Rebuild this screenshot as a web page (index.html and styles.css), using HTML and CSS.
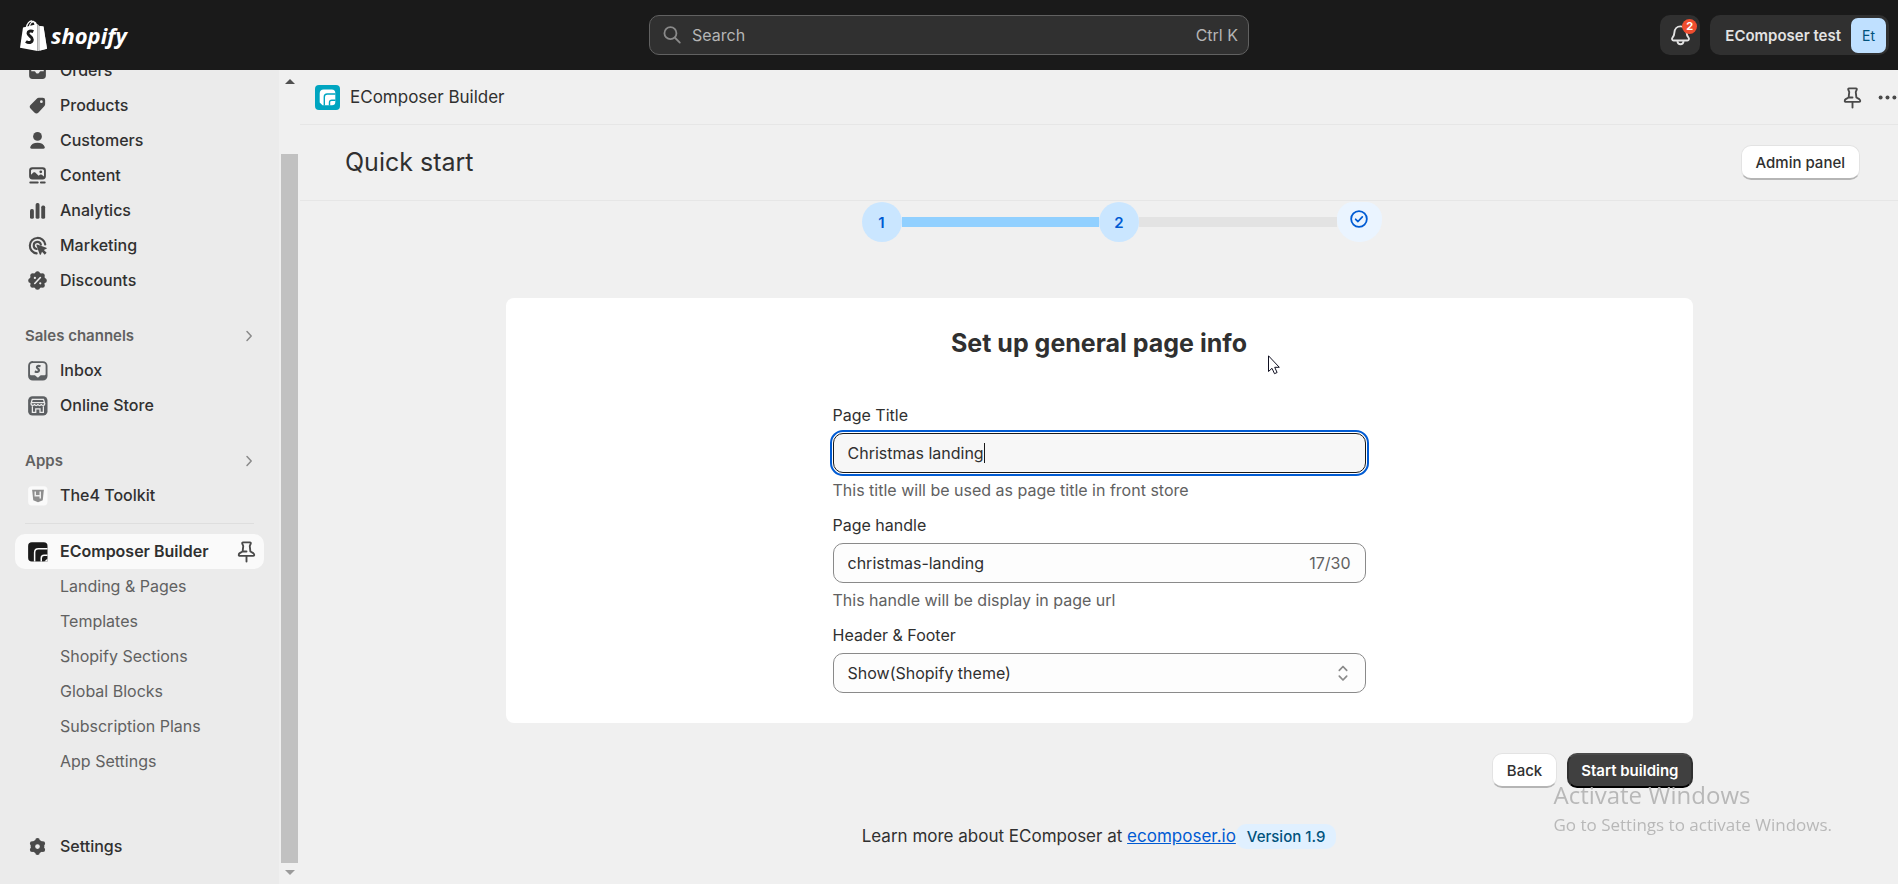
FILE: index.html
```html
<!DOCTYPE html>
<html lang="en">
<head>
<meta charset="utf-8">
<title>EComposer Builder · Quick start</title>
<link rel="stylesheet" href="styles.css">
</head>
<body>
<svg class="sprite" aria-hidden="true">
  <symbol id="pin" viewBox="0 0 20 20">
    <path d="M7.200 2.700h5.600c.5 0 .8.5.6 1l-.8 1.900.5 4.400 2.300 1.300c.6.5.8 1 .8 1.500 0 .5-.4.700-.8.700H4.600c-.5 0-.8-.3-.8-.8 0-.600.300-1.100.800-1.400l2.300-1.300.5-4.400-.8-1.900c-.2-.5.1-1 .6-1zM7.400 10h2.600" fill="none" stroke="currentColor" stroke-width="1.500" stroke-linejoin="round" stroke-linecap="round"/>
    <path d="M10 14v4" stroke="currentColor" stroke-width="1.500" stroke-linecap="round"/>
  </symbol>
  <symbol id="chevron" viewBox="0 0 20 20">
    <path d="M8 5.500l4.200 4.500L8 14.500" fill="none" stroke="currentColor" stroke-width="1.500" stroke-linecap="round" stroke-linejoin="round"/>
  </symbol>
</svg>

<header class="topbar">
  <a class="logo" href="#" aria-label="Shopify">
    <svg class="logo-bag" viewBox="0 0 27 31">
      <path d="M6.500 7.500C7 3.500 9.500.8 12 1c2 .1 3 2 3.200 4.500M9.500 6.500C10 3.500 12 1.700 14 2c1.500.3 2.200 1.600 2.500 3.500" fill="none" stroke="#fff" stroke-width="1.300"/>
      <path d="M3 7.500L17.500 4v27L0 27.700z" fill="#fff"/>
      <path d="M17.500 4l2 2 4 .5L27 28.800 18.500 31h-1z" fill="#d4d4d4"/>
      <path d="M20 6l3.500.5L27 28.800l-7 1.700z" fill="#fff"/>
      <path d="M13.300 11.600c-2.600-1.300-5.300-.4-5.300 1.700 0 2.900 4.500 3 4.300 6.300-.2 3-3.500 4-6.300 1.800" fill="none" stroke="#1a1a1a" stroke-width="3"/>
    </svg>
    <span class="logo-word">shopify</span>
  </a>
  <button class="search" type="button">
    <svg class="icon-search" viewBox="0 0 20 20"><circle cx="8.700" cy="8.500" r="5" fill="none" stroke="currentColor" stroke-width="1.500"/><path d="M12.500 12.300l4 4" stroke="currentColor" stroke-width="1.500" stroke-linecap="round"/></svg>
    <span>Search</span>
    <span class="search-keys">Ctrl K</span>
  </button>
  <div class="account">
    <button class="bell" type="button" aria-label="Notifications">
      <svg class="icon" viewBox="0 0 20 20"><path d="M10 2.700c-2.900 0-4.700 2.200-4.900 5-.1 2-.6 3-1.500 4-.8 1-.3 2.300.9 2.300h11c1.200 0 1.700-1.300.9-2.300-.9-1-1.400-2-1.500-4-.2-2.800-2-5-4.900-5z" fill="none" stroke="currentColor" stroke-width="1.500" stroke-linejoin="round"/><path d="M7.500 14.500c.2 1.600 1.200 2.500 2.500 2.500s2.300-.9 2.500-2.500" fill="none" stroke="currentColor" stroke-width="1.500"/></svg>
      <span class="bell-count">2</span>
    </button>
    <button class="store" type="button">
      <span>EComposer test</span>
      <span class="avatar">Et</span>
    </button>
  </div>
</header>

<div class="frame">
  <aside class="sidebar">
    <nav class="nav">
      <a class="item" href="#"><svg class="icon" viewBox="0 0 20 20"><path fill-rule="evenodd" d="M6 3.300h8a2.700 2.700 0 0 1 2.700 2.700v8A2.700 2.700 0 0 1 14 16.700H6A2.700 2.700 0 0 1 3.300 14V6A2.700 2.700 0 0 1 6 3.300zM5 5.500V10.500h2.500c.4 0 .7.300.9.700.6 1.600 2.600 1.600 3.200 0 .200-.4.500-.7.900-.7H15v-5z"/></svg>Orders</a>
      <a class="item" href="#"><svg class="icon" viewBox="0 0 20 20"><path fill-rule="evenodd" d="M11 3.800h3.200A1.900 1.900 0 0 1 16.100 5.700V9c0 .6-.2 1.200-.7 1.600l-4.600 4.900a2.300 2.300 0 0 1-3.300 0l-2.900-2.900a2.300 2.300 0 0 1 0-3.300l4.800-4.800c.4-.4 1-.7 1.600-.7zM13.100 8a1.100 1.100 0 1 0 0-2.200 1.100 1.100 0 0 0 0 2.200z"/></svg>Products</a>
      <a class="item" href="#"><svg class="icon" viewBox="0 0 20 20"><circle cx="10" cy="6.700" r="3.500"/><path d="M4.200 15.200c.6-2.300 3-3.500 5.800-3.500s5.200 1.200 5.800 3.500c.2.800-.3 1.400-1.100 1.400H5.300c-.8 0-1.300-.6-1.100-1.400z"/></svg>Customers</a>
      <a class="item" href="#"><svg class="icon" viewBox="0 0 20 20"><path fill-rule="evenodd" d="M5.800 3.400h8.400a2.500 2.500 0 0 1 2.500 2.500v4.700a2.500 2.500 0 0 1-2.500 2.500H5.800a2.500 2.500 0 0 1-2.500-2.500V5.900a2.500 2.500 0 0 1 2.500-2.500zM4.800 9.300l1.900-1.700c.5-.4 1-.4 1.500 0l2.700 2.600 1-.8c.5-.4 1-.4 1.500 0l1.800 1.300V6.200c0-.7-.6-1.300-1.300-1.300H6.100c-.7 0-1.300.6-1.300 1.300z"/><circle cx="12.600" cy="7" r="1.100"/><path d="M4.200 15.600h6M12.700 15.600h3.100" stroke="currentColor" stroke-width="1.500" stroke-linecap="round"/></svg>Content</a>
      <a class="item" href="#"><svg class="icon" viewBox="0 0 20 20"><rect x="4" y="8.800" width="3.100" height="7.800" rx="1.300"/><rect x="8.500" y="4" width="3.100" height="12.600" rx="1.300"/><rect x="13" y="6" width="3.100" height="10.600" rx="1.300"/></svg>Analytics</a>
      <a class="item" href="#"><svg class="icon" viewBox="0 0 20 20"><path d="M16.200 9.200a6.200 6.200 0 1 0-6.900 7.100M12.700 9.300a2.900 2.900 0 1 0-3.400 3.500" fill="none" stroke="currentColor" stroke-width="1.700" stroke-linecap="round"/><path d="M9.700 9.200l7.400 2.500c.4.200.4.700 0 .9l-2 .9 2.200 2.300-1.500 1.500-2.200-2.300-.9 2.100c-.2.400-.7.400-.9 0L9.100 9.800c-.1-.4.200-.7.600-.6z"/></svg>Marketing</a>
      <a class="item" href="#"><svg class="icon" viewBox="0 0 20 20"><g><circle cx="10" cy="10" r="6.200"/><circle cx="10" cy="4.600" r="2"/><circle cx="10" cy="15.400" r="2"/><circle cx="4.600" cy="10" r="2"/><circle cx="15.400" cy="10" r="2"/><circle cx="6.200" cy="6.200" r="2"/><circle cx="13.800" cy="6.200" r="2"/><circle cx="6.200" cy="13.800" r="2"/><circle cx="13.800" cy="13.800" r="2"/></g><path d="M7.800 12.400l4.500-4.800" stroke="#ebebeb" stroke-width="1.300" stroke-linecap="round"/><circle cx="7.900" cy="7.900" r=".9" fill="#ebebeb"/><circle cx="12.200" cy="12.200" r=".9" fill="#ebebeb"/></svg>Discounts</a>

      <a class="heading" href="#">Sales channels<svg class="icon-chevron"><use href="#chevron"/></svg></a>
      <a class="item" href="#"><svg class="icon" viewBox="0 0 20 20"><path fill="#5c5f62" fill-rule="evenodd" d="M6.500 2.500h7.800A3.700 3.700 0 0 1 18 6.200v8.100a3.700 3.700 0 0 1-3.700 3.700H6.200a3.700 3.700 0 0 1-3.700-3.700V6.200a3.700 3.700 0 0 1 4-3.700zM6.200 4A2.200 2.200 0 0 0 4 6.200v6.500c0 .6.400 1 1 1h2.400c.4 0 .7.100 1 .4l1.400 1.200c.3.300.7.300 1 0l1.300-1.200c.3-.3.600-.4 1-.4h2.400c.6 0 1-.4 1-1V6.200A2.200 2.200 0 0 0 14.300 4z"/><path d="M12.400 6.700c-1.700-.8-3.100-.3-2.900.8.200 1.100 1.900 1.200 1.700 2.500-.2 1.300-1.900 1.500-3.300.6" fill="none" stroke="#5c5f62" stroke-width="1.700"/></svg>Inbox</a>
      <a class="item" href="#"><svg class="icon" viewBox="0 0 20 20"><rect x="2.500" y="2.500" width="15.500" height="15.500" rx="3.500" fill="#5c5f62"/><g fill="none" stroke="#ebebeb" stroke-width="1"><path d="M5.800 5h9l1 3.500c0 1.800-2.500 2-2.800.3-.3 1.700-2.400 1.700-2.700 0-.3 1.700-2.400 1.700-2.700 0-.3 1.700-2.800 1.500-2.800-.3zM5.200 7.700h10.200M5.900 10.500v4.900h2.700v-2.700h3.400v2.700h2.700v-4.900"/></g></svg>Online Store</a>

      <a class="heading" href="#">Apps<svg class="icon-chevron"><use href="#chevron"/></svg></a>
      <a class="item" href="#"><svg class="icon" viewBox="0 0 20 20"><rect x="2.500" y="2.500" width="15.500" height="15.500" rx="3" fill="#fafafa"/><path d="M5.700 5.300h9.400l-.9 8.500-3.800 1.500-3.800-1.500z" fill="#8e8e8e"/><path d="M8.200 6.700v3.500h4.200M12.200 6.700v5.700" fill="none" stroke="#eee" stroke-width="1.200"/></svg>The4 Toolkit</a>
      <hr class="divider">
      <a class="item item-active" href="#"><svg class="icon" viewBox="0 0 20 20"><path d="M5.500 2.500H15a3 3 0 0 1 3 3V18H5.500a3 3 0 0 1-3-3V5.500a3 3 0 0 1 3-3z" fill="#1a1a1a"/><path d="M7.700 18v-7.300c0-2 1-3 3-3H18M13 18v-2.700c0-1.500.8-2.300 2.300-2.300H18" fill="none" stroke="#fafafa" stroke-width="1.200"/><path d="M18 15.500V18h-2.500z" fill="#fafafa"/></svg>EComposer Builder<svg class="icon item-pin"><use href="#pin"/></svg></a>
      <a class="item sub" href="#">Landing &amp; Pages</a>
      <a class="item sub" href="#">Templates</a>
      <a class="item sub" href="#">Shopify Sections</a>
      <a class="item sub" href="#">Global Blocks</a>
      <a class="item sub" href="#">Subscription Plans</a>
      <a class="item sub" href="#">App Settings</a>
      <a class="item item-settings" href="#"><svg class="icon" viewBox="0 0 20 20"><circle cx="10" cy="10" r="3.700" fill="none" stroke="currentColor" stroke-width="3.600"/><g stroke="currentColor" stroke-width="3.600" stroke-linecap="round"><path d="M10 5V5.100M10 14.900V15M5.700 7.500h.1M14.200 7.500h.1M5.700 12.500h.1M14.200 12.500h.1"/></g></svg>Settings</a>
    </nav>
  </aside>
  <div class="scrollbar" aria-hidden="true">
    <span class="arrow arrow-up"></span>
    <span class="thumb"></span>
    <span class="arrow arrow-down"></span>
  </div>

  <main class="main">
    <div class="appbar">
      <svg class="app-logo" viewBox="0 0 25 25"><rect width="25" height="25" rx="4" fill="#00a5c0"/><path d="M4.700 17.500V8.500a4 4 0 0 1 4-4h8.100a3.500 3.500 0 0 1 3.500 3.500v9a3.300 3.300 0 0 1-3.300 3.300H7.500z" fill="#fff"/><path d="M9.300 20.500V12c0-2 1-3 3-3h8.200M14.500 20.500v-3c0-1.500.8-2.300 2.300-2.300h3.700" fill="none" stroke="#00a5c0" stroke-width="1.400"/></svg>
      <span class="app-name">EComposer Builder</span>
      <button class="ghost" type="button" aria-label="Pin app"><svg class="icon"><use href="#pin"/></svg></button>
      <button class="ghost" type="button" aria-label="More actions"><svg class="icon" viewBox="0 0 20 20"><circle cx="4.500" cy="10" r="1.600"/><circle cx="10" cy="10" r="1.600"/><circle cx="15.500" cy="10" r="1.600"/></svg></button>
    </div>
    <div class="titlebar">
      <h1 class="page-title">Quick start</h1>
      <button class="button" type="button">Admin panel</button>
    </div>

    <div class="content">
      <div class="steps">
        <span class="step">1</span>
        <span class="track track-done"></span>
        <span class="step">2</span>
        <span class="track"></span>
        <span class="step step-last"><svg class="icon-check" viewBox="0 0 20 20"><circle cx="10" cy="10" r="8.700" fill="none" stroke="currentColor" stroke-width="2"/><path d="M6.300 10.300l2.600 2.500 4.800-5.200" fill="none" stroke="currentColor" stroke-width="1.900" stroke-linecap="round" stroke-linejoin="round"/></svg></span>
      </div>

      <form class="setup">
        <section class="card">
          <h2 class="card-title">Set up general page info</h2>
          <div class="fields">
            <div class="field">
              <label for="page-title">Page Title</label>
              <div class="control control-focus">
                <input class="input input-fit" id="page-title" type="text" value="Christmas landing">
                <span class="caret"></span>
              </div>
              <p class="help">This title will be used as page title in front store</p>
            </div>
            <div class="field">
              <label for="page-handle">Page handle</label>
              <div class="control">
                <input class="input" id="page-handle" type="text" value="christmas-landing">
                <span class="counter">17/30</span>
              </div>
              <p class="help">This handle will be display in page url</p>
            </div>
            <div class="field">
              <label for="header-footer">Header &amp; Footer</label>
              <div class="control">
                <select class="input" id="header-footer"><option>Show(Shopify theme)</option></select>
                <svg class="icon-select" viewBox="0 0 16 20"><path d="M4.300 7.300L8 3.500l3.700 3.800M4.300 13.200L8 17l3.700-3.800" fill="none" stroke="currentColor" stroke-width="1.700" stroke-linecap="round" stroke-linejoin="round"/></svg>
              </div>
            </div>
          </div>
        </section>
        <div class="actions">
          <button class="button" type="button">Back</button>
          <button class="button button-primary" type="button">Start building</button>
        </div>
      </form>

      <footer class="footer">
        <span>Learn more about EComposer at <a href="#">ecomposer.io</a></span><span class="version">Version 1.9</span>
      </footer>
    </div>
  </main>
</div>

<div class="watermark">
  <div class="watermark-title">Activate Windows</div>
  <div class="watermark-text">Go to Settings to activate Windows.</div>
</div>
<svg class="pointer" viewBox="0 0 12 20" aria-hidden="true"><path d="M.5.800v15.700l3.500-3.200 2.500 5.400 2.600-1.200-2.400-5.200h4.600z" fill="#fff" stroke="#112" stroke-width="1"/></svg>
</body>
</html>
```
FILE: styles.css
```css
* {
  box-sizing: border-box;
}

body {
  margin: 0;
  height: 100vh;
  display: flex;
  flex-direction: column;
  overflow: hidden;
  background: #f0f0f0;
  color: #303030;
  font-family: Inter, "Liberation Sans", sans-serif;
  font-size: 16px;
  font-optical-sizing: none;
  line-height: 25px;
}

button,
input,
select {
  font: inherit;
  color: inherit;
}

a {
  color: inherit;
  text-decoration: none;
}

.sprite {
  position: absolute;
  width: 0;
  height: 0;
}

.icon {
  flex: none;
  width: 25px;
  height: 25px;
  fill: currentColor;
  color: #4a4a4a;
}

/* Top bar */
.topbar {
  position: relative;
  z-index: 1;
  flex: none;
  display: grid;
  grid-template-columns: 1fr 600px 1fr;
  align-items: center;
  height: 70px;
  padding: 0 9px;
  background: #1a1a1a;
  color: #e3e3e3;
}

.logo {
  display: flex;
  align-items: center;
  gap: 4px;
  margin-left: 11px;
}

.logo-bag {
  width: 27px;
  height: 31px;
}

.logo-word {
  color: #fff;
  font-family: "Open Sans", sans-serif;
  font-size: 22px;
  font-style: italic;
  font-weight: 700;
}

.search {
  display: flex;
  align-items: center;
  gap: 8px;
  height: 40px;
  padding: 0 10px;
  border: 1px solid #616161;
  border-radius: 10px;
  background: #303030;
  color: #b5b5b5;
  text-align: left;
}

.icon-search {
  width: 24px;
  height: 24px;
  color: #8a8a8a;
}

.search-keys {
  margin-left: auto;
}

.account {
  display: flex;
  justify-content: flex-end;
  gap: 10px;
}

.bell {
  position: relative;
  display: grid;
  place-items: center;
  width: 40px;
  height: 40px;
  padding: 0;
  border: 0;
  border-radius: 10px;
  background: #303030;
}

.bell .icon {
  color: #e3e3e3;
}

.bell-count {
  position: absolute;
  top: 4px;
  right: 3px;
  width: 15px;
  height: 15px;
  border-radius: 50%;
  background: #ef4d2f;
  color: #fff;
  font-size: 11px;
  font-weight: 700;
  line-height: 15px;
}

.store {
  display: flex;
  align-items: center;
  gap: 10px;
  height: 40px;
  padding: 0 3px 0 15px;
  border: 0;
  border-radius: 10px;
  background: #303030;
  color: #e3e3e3;
  font-size: 15px;
  font-weight: 600;
}

.avatar {
  width: 35px;
  border-radius: 7px;
  background: #bfe0ff;
  color: #00527c;
  font-size: 14px;
  font-weight: 400;
  line-height: 35px;
}

/* Sidebar */
.frame {
  flex: 1;
  min-height: 0;
  display: flex;
}

.sidebar {
  flex: none;
  width: 279px;
  overflow: hidden;
  background: #ebebeb;
}

.nav {
  height: 100%;
  display: flex;
  flex-direction: column;
  padding: 0 15px 20px;
}

.nav > :first-child {
  margin-top: -17px;
}

.item,
.heading {
  flex: none;
  display: flex;
  align-items: center;
  height: 35px;
}

.item {
  gap: 10px;
  padding: 0 5px 0 10px;
  font-weight: 500;
}

.heading {
  justify-content: space-between;
  margin-top: 20px;
  padding: 0 5px 0 10px;
  color: #616161;
  font-size: 15px;
  font-weight: 600;
}

.icon-chevron {
  width: 20px;
  height: 20px;
  color: #8a8a8a;
}

.divider {
  flex: none;
  height: 1px;
  margin: 10px;
  border: 0;
  background: #dedede;
}

.item-active {
  width: 249px;
  border-radius: 10px;
  background: #fafafa;
  font-weight: 600;
}

.item-pin {
  margin-left: auto;
}

.sub {
  padding-left: 45px;
  color: #616161;
  font-weight: 400;
}

.item-settings {
  margin-top: auto;
}

/* Scrollbar beside the navigation */
.scrollbar {
  flex: none;
  display: flex;
  flex-direction: column;
  align-items: center;
  width: 21px;
  padding: 9px 2px;
}

.arrow {
  border: 5px solid transparent;
}

.arrow-up {
  border-top-width: 0;
  border-bottom-color: #505050;
}

.arrow-down {
  border-bottom-width: 0;
  border-top-color: #9a9a9a;
}

.thumb {
  flex: 1;
  align-self: stretch;
  margin: 70px 0 7px;
  background: #c1c1c1;
}

/* Main column */
.main {
  flex: 1;
  min-width: 0;
  display: flex;
  flex-direction: column;
}

.appbar {
  flex: none;
  display: flex;
  align-items: center;
  height: 55px;
  padding-left: 15px;
  border-bottom: 1px solid #e6e6e6;
}

.app-logo {
  width: 25px;
  height: 25px;
  margin-right: 10px;
}

.app-name {
  margin-right: auto;
  font-size: 17px;
}

.ghost {
  display: flex;
  margin-left: 10px;
  padding: 0;
  border: 0;
  background: none;
}

.ghost:last-child {
  margin-right: -2px;
}

.titlebar {
  flex: none;
  display: flex;
  align-items: center;
  justify-content: space-between;
  height: 76px;
  padding: 0 38px 0 45px;
  border-bottom: 1px solid #e6e6e6;
}

.page-title,
.card-title,
.button,
.version {
  font-optical-sizing: auto;
}

.page-title {
  margin: 0;
  font-size: 25px;
  font-weight: 400;
}

.button {
  height: 35px;
  padding: 0 14px;
  border: 1px solid #e3e3e3;
  border-bottom: 2px solid #b5b5b5;
  border-radius: 10px;
  background: #fff;
  font-size: 15px;
  font-weight: 500;
  line-height: 25px;
}

.content {
  width: 100%;
  max-width: 1187px;
  margin: 0 auto;
}

.steps {
  display: flex;
  align-items: center;
  width: 565px;
  height: 40px;
  margin: 1px auto 0;
  padding-left: 45px;
}

.step {
  flex: none;
  display: grid;
  place-items: center;
  width: 40px;
  height: 40px;
  border-radius: 50%;
  background: #cae6ff;
  color: #005bd3;
  font-size: 15px;
  font-weight: 600;
}

.step-last {
  place-items: start center;
  width: 45px;
  padding-top: 8px;
  border-radius: 16px 16px 22px 22px;
  background: #eaf4ff;
}

.icon-check {
  width: 18px;
  height: 18px;
}

.track {
  flex: 1;
  height: 10px;
  background: #e3e3e3;
}

.track-done {
  background: #91d0ff;
}

.card {
  margin-top: 56px;
  padding: 30px;
  border-radius: 8px;
  background: #fff;
}

.card-title {
  margin: 0 0 45px;
  font-size: 25px;
  font-weight: 700;
  line-height: 30px;
  text-align: center;
}

.fields {
  display: flex;
  flex-direction: column;
  gap: 10px;
  max-width: 533px;
  margin: 0 auto;
}

.field {
  display: flex;
  flex-direction: column;
  gap: 5px;
}

.control {
  display: flex;
  align-items: center;
  height: 40px;
  padding: 0 14px;
  border: 1px solid #8a8a8a;
  border-radius: 10px;
  background: #fdfdfd;
}

.control-focus {
  border-color: #1a1a1a;
  background: #f7f7f7;
  outline: 2px solid #005bd3;
  outline-offset: 1px;
}

.input {
  flex: 1;
  min-width: 0;
  padding: 0;
  border: 0;
  outline: 0;
  background: none;
  appearance: none;
}

.input-fit {
  flex: none;
  field-sizing: content;
}

.caret {
  width: 1px;
  height: 20px;
  background: #1a1a1a;
}

.counter,
.help {
  margin: 0;
  color: #616161;
}

.icon-select {
  width: 16px;
  height: 20px;
  color: #8a8a8a;
}

.actions {
  display: flex;
  justify-content: flex-end;
  gap: 10px;
  margin-top: 30px;
}

.button-primary {
  padding: 0 12px;
  border: 2px solid #303030;
  border-top-color: #4a4a4a;
  border-bottom-color: #000;
  background: #404040;
  color: #fff;
  font-weight: 600;
}

.footer {
  display: flex;
  align-items: center;
  justify-content: center;
  margin-top: 36px;
  font-size: 17px;
}

.footer a {
  color: #005bd3;
  text-decoration: underline;
}

.version {
  padding: 0 11px;
  border-radius: 10px;
  background: #e0f0ff;
  color: #00527c;
  font-size: 15px;
  font-weight: 500;
}

/* Overlays */
.watermark {
  position: fixed;
  right: 66px;
  bottom: 47px;
  color: #b8b8b8;
  font-family: "Open Sans", sans-serif;
  font-size: 17px;
  line-height: 25px;
}

.watermark-title {
  font-size: 24px;
  line-height: 34px;
}

.pointer {
  position: absolute;
  left: 1268px;
  top: 355px;
  width: 12px;
  height: 20px;
}
```
